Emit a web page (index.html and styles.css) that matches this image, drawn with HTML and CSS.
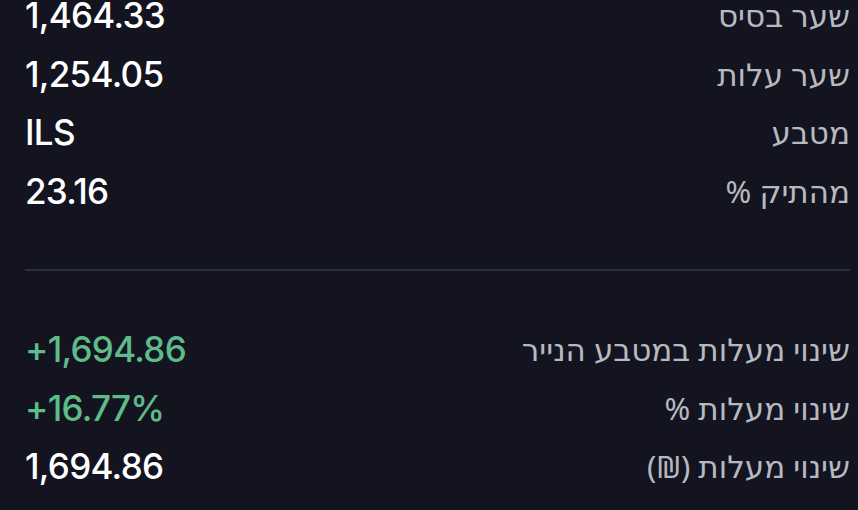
FILE: index.html
```html
<!DOCTYPE html>
<html lang="he">
<head>
<meta charset="utf-8">
<link rel="stylesheet" href="styles.css">
</head>
<body>
<main class="panel" dir="rtl">
  <section class="group">
    <div class="row"><span class="label">שער בסיס</span><span class="value">1,464.33</span></div>
    <div class="row"><span class="label">שער עלות</span><span class="value">1,254.05</span></div>
    <div class="row"><span class="label">מטבע</span><span class="value">ILS</span></div>
    <div class="row"><span class="label">מהתיק %</span><span class="value">23.16</span></div>
  </section>
  <hr class="divider">
  <section class="group">
    <div class="row"><span class="label">שינוי מעלות במטבע הנייר</span><span class="value up" dir="ltr">+1,694.86</span></div>
    <div class="row"><span class="label">שינוי מעלות %</span><span class="value up" dir="ltr">+16.77%</span></div>
    <div class="row"><span class="label">שינוי מעלות (₪)</span><span class="value" dir="ltr">1,694.86</span></div>
  </section>
</main>
</body>
</html>
```
FILE: styles.css
```css
html, body {
  margin: 0;
  padding: 0;
  background: #13141f;
  height: 100%;
  overflow: hidden;
}
.panel {
  margin-top: -14px;
  padding: 0 8px 0 25px;
}
.group {
  display: flex;
  flex-direction: column;
}
.row {
  height: 58.5px;
  display: flex;
  align-items: center;
  justify-content: space-between;
}
.label {
  font-family: "Noto Sans", "DejaVu Sans", sans-serif;
  font-size: 31px;
  color: #b7b9c0;
}
.value {
  font-family: Inter, "Noto Sans", sans-serif;
  font-size: 35px;
  font-weight: 500;
  color: #ffffff;
  letter-spacing: -0.7px;
}
.value.up {
  color: #5dbc89;
}
.divider {
  margin: 49px 0;
  border: 0;
  height: 2px;
  background: #2c2e38;
}
```
